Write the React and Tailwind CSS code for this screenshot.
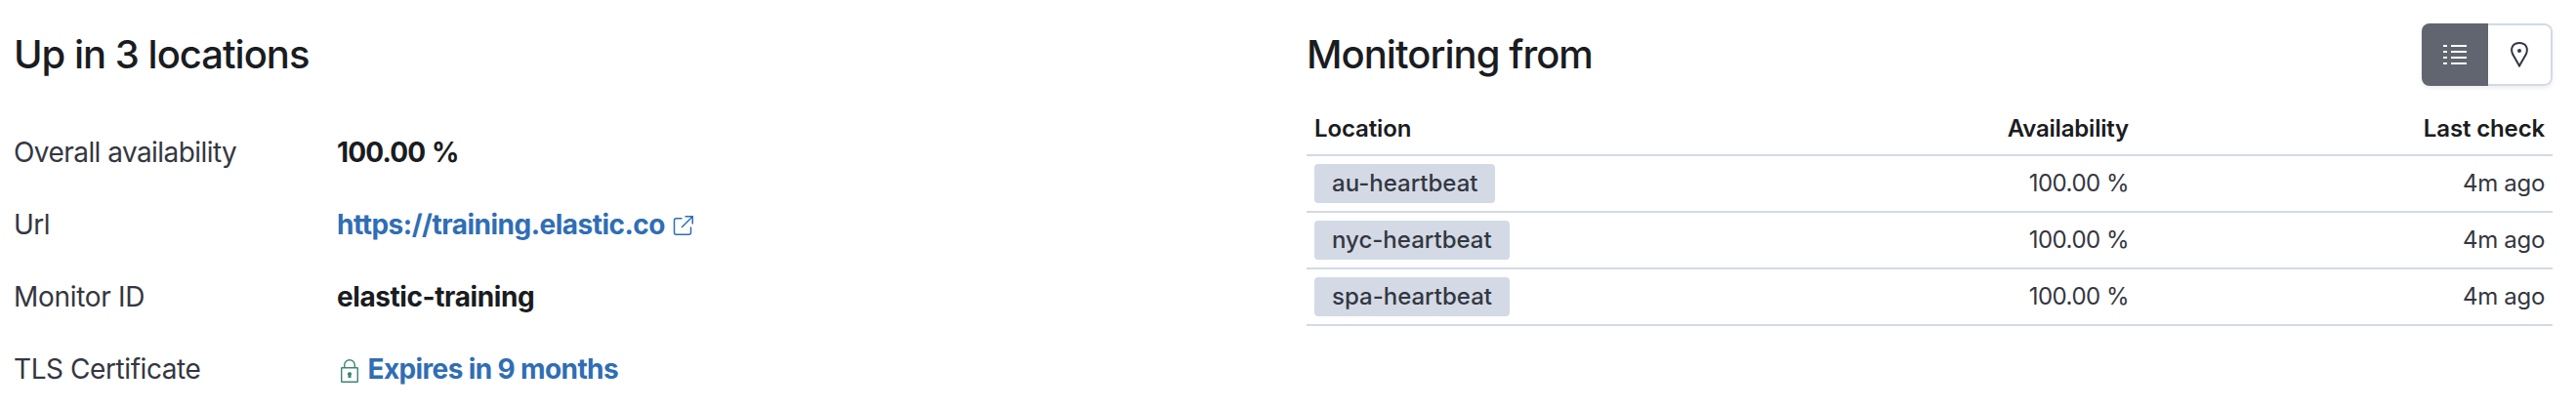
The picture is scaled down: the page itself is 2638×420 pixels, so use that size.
const details = [
  { label: "Overall availability", value: "100.00 %", labelTracking: "tracking-[-0.56px]", valueTracking: "tracking-[-0.85px] [word-spacing:1px]" },
  { label: "Url", value: "https://training.elastic.co", link: true, external: true, labelTracking: "tracking-[-0.5px]", valueTracking: "tracking-[-0.5px]" },
  { label: "Monitor ID", value: "elastic-training", labelTracking: "tracking-[-0.3px]", valueTracking: "tracking-[-0.42px]" },
  { label: "TLS Certificate", value: "Expires in 9 months", link: true, lock: true, labelTracking: "tracking-[-0.42px]", valueTracking: "tracking-[-0.62px]" },
];

const locations = ["au-heartbeat", "nyc-heartbeat", "spa-heartbeat"];

function ExternalIcon() {
  return (
    <svg className="ml-[7px] mt-0.5 size-6 shrink-0" viewBox="0 0 24 24" fill="none" stroke="#2f6eb5" strokeWidth="1.5">
      <path d="M10.5 4.750H4.500a2 2 0 0 0-2 2v12.500a2 2 0 0 0 2 2h13a2 2 0 0 0 2-2V13.500M13.500 2.750h7.750V10.500M21 3 10 14" />
    </svg>
  );
}

function LockIcon() {
  return (
    <svg className="mt-[3px] ml-1 mr-[9.5px] h-6 w-[18px] shrink-0" viewBox="0 0 18 24" fill="none" stroke="#3c8577" strokeWidth="1.4">
      <path d="M3.700 8V6a5.300 5.300 0 0 1 10.600 0v2" />
      <rect x=".7" y="8.700" width="16.600" height="14.600" rx=".5" />
      <path d="M9 13a2.200 2.200 0 0 1 1.500 3.700V19h-3V16.700A2.200 2.200 0 0 1 9 13Z" fill="#3c8577" stroke="none" />
    </svg>
  );
}

export default function App() {
  return (
    <div className="flex h-[420px] w-[2638px] overflow-hidden bg-white font-['Inter',sans-serif] text-[#343741]">
      <section className="w-[1338px] pl-[14px] pt-8">
        <h2 className="text-[40px] leading-12 font-medium tracking-[-0.025em] text-[#1a1c21]">Up in 3 locations</h2>
        <dl className="mt-[39px]">
          {details.map((d) => (
            <div key={d.label} className="flex h-[74px] items-center text-[28px] leading-[42px]">
              <dt className={`w-[331px] ${d.labelTracking}`}>{d.label}</dt>
              <dd className={`flex items-center font-bold ${d.link ? "text-[#2f6eb5]" : "text-[#1a1c21]"}`}>
                {d.lock && <LockIcon />}
                <span className={d.valueTracking}>{d.value}</span>
                {d.external && <ExternalIcon />}
              </dd>
            </div>
          ))}
        </dl>
      </section>
      <section className="w-[1276px] pt-6">
        <div className="flex h-16 justify-between">
          <h2 className="pt-2 text-[40px] leading-12 font-medium tracking-[-0.024em] text-[#1a1c21]">Monitoring from</h2>
          <div className="flex h-16 w-[134px] overflow-hidden rounded-[8px] shadow-[0_2px_4px_rgba(0,0,0,0.08)]">
            <button className="flex w-[68px] items-center justify-center bg-[#61656f]" aria-label="List view">
              <svg className="h-5 w-6" viewBox="0 0 24 20" fill="#fff">
                <path d="M0 0h4v2H0zM8 0h16v2H8zM0 6h4v2H0zM8 6h16v2H8zM0 12h4v2H0zM8 12h16v2H8zM0 18h4v2H0zM8 18h16v2H8z" />
              </svg>
            </button>
            <button className="flex flex-1 items-center justify-center rounded-r-[8px] border-2 border-l-0 border-[#d3dae6] bg-white" aria-label="Map view">
              <svg className="h-[26px] w-[18px]" viewBox="0 0 18 26" fill="none" stroke="#343741" strokeWidth="2">
                <path d="M9 24.500 1.900 12C-.3 6 2.500 1 9 1s9.300 5 7.100 11Z" />
                <circle cx="9" cy="9" r="2" fill="#343741" stroke="none" />
              </svg>
            </button>
          </div>
        </div>
        <table className="mt-4 w-full table-fixed border-separate border-spacing-0 text-[24px] leading-9">
          <thead>
            <tr className="h-14 text-[#1a1c21]">
              <th className="w-[425px] border-b-2 border-[#d3dae6] px-2 pt-0.5 pb-0 text-left font-semibold tracking-[-0.12px]">Location</th>
              <th className="w-[425px] border-b-2 border-[#d3dae6] px-2 pt-0.5 pb-0 text-right font-semibold tracking-[-0.2px]">Availability</th>
              <th className="border-b-2 border-[#d3dae6] px-2 pt-0.5 pb-0 text-right font-semibold tracking-[-0.14px]">Last check</th>
            </tr>
          </thead>
          <tbody>
            {locations.map((name) => (
              <tr key={name} className="h-[58px]">
                <td className="border-b-2 border-[#d3dae6] px-2 py-0">
                  <span className="flex h-10 w-fit items-center rounded-[4px] bg-[#d3dae6] px-[18px] font-medium">{name}</span>
                </td>
                <td className="border-b-2 border-[#d3dae6] px-2 py-0 text-right tracking-[-0.5px]">100.00 %</td>
                <td className="border-b-2 border-[#d3dae6] px-2 py-0 text-right tracking-[-0.3px]">4m ago</td>
              </tr>
            ))}
          </tbody>
        </table>
      </section>
    </div>
  );
}
